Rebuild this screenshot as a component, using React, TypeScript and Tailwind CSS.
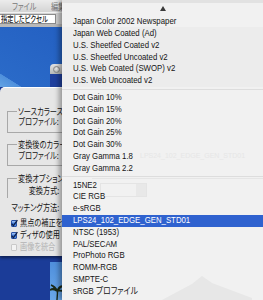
import type { ReactNode } from "react";

type MenuItem = { label: string; selected?: boolean };

// ICC profile popup, split by separators
const menuGroups: MenuItem[][] = [
  [
    { label: "Japan Color 2002 Newspaper" },
    { label: "Japan Web Coated (Ad)" },
    { label: "U.S. Sheetfed Coated v2" },
    { label: "U.S. Sheetfed Uncoated v2" },
    { label: "U.S. Web Coated (SWOP) v2" },
    { label: "U.S. Web Uncoated v2" },
  ],
  [
    { label: "Dot Gain 10%" },
    { label: "Dot Gain 15%" },
    { label: "Dot Gain 20%" },
    { label: "Dot Gain 25%" },
    { label: "Dot Gain 30%" },
    { label: "Gray Gamma 1.8" },
    { label: "Gray Gamma 2.2" },
  ],
  [
    { label: "15NE2" },
    { label: "CIE RGB" },
    { label: "e-sRGB" },
    { label: "LPS24_102_EDGE_GEN_STD01", selected: true },
    { label: "NTSC (1953)" },
    { label: "PAL/SECAM" },
    { label: "ProPhoto RGB" },
    { label: "ROMM-RGB" },
    { label: "SMPTE-C" },
    { label: "sRGB プロファイル" },
  ],
];

// screenshot is squeezed horizontally, so text is too
function Squeeze({ children, right = false }: { children: ReactNode; right?: boolean }) {
  return (
    <span
      className={`inline-block whitespace-nowrap scale-x-[0.84] ${right ? "origin-right" : "origin-left"}`}
    >
      {children}
    </span>
  );
}

// japanese UI labels come out a bit narrower than the latin menu text
function Jp({ children, right = false }: { children: ReactNode; right?: boolean }) {
  return (
    <span
      className={`inline-block whitespace-nowrap scale-x-[0.78] ${right ? "origin-right" : "origin-left"}`}
    >
      {children}
    </span>
  );
}

function Checkbox({ checked }: { checked: boolean }) {
  if (!checked) {
    return <span className="w-[6px] h-[7px] flex-none rounded-[1px] border border-[#c9c9c9] bg-[#f3f3f3]" />;
  }
  return (
    <span className="w-[6px] h-[7px] flex-none rounded-[1px] border border-[#2a53a6] bg-[linear-gradient(#a9c8f4,#3a78da_55%,#5d95e6)] flex items-center justify-center overflow-visible">
      <svg width="7" height="7" viewBox="0 0 7 7" className="overflow-visible">
        <path d="M0.6 3.6 L2.4 5.6 L6.4 0.2" stroke="#0d1f4a" strokeWidth="1.3" fill="none" />
      </svg>
    </span>
  );
}

function LabelRow({ label }: { label: string }) {
  return (
    <div className="h-[12px] w-[51px] flex items-center justify-end">
      <Jp right>{label}</Jp>
    </div>
  );
}

function CheckRow({ label, checked, disabled = false }: { label: string; checked: boolean; disabled?: boolean }) {
  return (
    <div className={`h-[12px] flex items-center gap-[3px] pl-[11px] ${disabled ? "text-[#b4b4b4]" : ""}`}>
      <Checkbox checked={checked} />
      <Jp>{label}</Jp>
    </div>
  );
}

function Dialog() {
  return (
    <div className="relative z-[1] h-[169px] bg-[#e6e6e6] rounded-tl-[5px] border-t border-white shadow-[0_2px_3px_rgba(0,0,0,0.45)] pt-[18px] text-[9.2px] leading-none text-[#141414]">
      <fieldset className="ml-[7px] border-t border-l border-b border-[#a8a8a8] pb-[4px]">
        <legend className="ml-[9px] px-[1px] h-[10px] leading-[10px]">
          <Jp>ソースカラースペース</Jp>
        </legend>
        <LabelRow label="プロファイル:" />
      </fieldset>

      <fieldset className="mt-[6px] ml-[7px] border-t border-l border-b border-[#a8a8a8] pt-[1px] pb-[3px]">
        <legend className="ml-[9px] px-[1px] h-[10px] leading-[10px]">
          <Jp>変換後のカラースペース</Jp>
        </legend>
        <LabelRow label="プロファイル:" />
      </fieldset>

      <fieldset className="mt-[7px] ml-[7px] border-t border-l border-[#a8a8a8] pt-[2px] pb-[1px]">
        <legend className="ml-[9px] px-[1px] h-[10px] leading-[10px]">
          <Jp>変換オプション</Jp>
        </legend>
        <LabelRow label="変換方式:" />
      </fieldset>

      <div className="mt-[4px] h-[12px] w-[59px] flex items-center justify-end">
        <Jp right>マッチング方法:</Jp>
      </div>
      <div className="mt-[3px] flex flex-col">
        <CheckRow label="黒点の補正を使用" checked />
        <CheckRow label="ディザの使用" checked />
        <CheckRow label="画像を統合" checked={false} disabled />
      </div>
    </div>
  );
}

function ProfileMenu() {
  return (
    <div className="absolute z-10 top-0 left-[62px] right-0 bottom-0 bg-[#f1f1f1] shadow-[-3px_0_5px_rgba(0,0,0,0.35)] font-['Liberation_Sans','Noto_Sans_CJK_JP',sans-serif] text-[9.3px] leading-none text-[#141414]">
      {/* faint things showing through the menu */}
      <div className="absolute top-0 left-0 right-0 h-[3px] bg-[#e2e2e2]" />
      <div className="absolute top-[27px] left-0 right-0 h-[60px] bg-[#ececec]" />
      <div className="absolute top-[178px] left-[30px] right-0 h-px bg-[#e5e5e5]" />
      <div className="absolute top-[183px] left-[38px] w-[47px] h-[14px] border border-[#e4e4e4] flex justify-end">
        <div className="w-[10px] bg-[#e8e8e8]" />
      </div>
      <div className="absolute top-[152px] left-[78px] text-[7px] text-[#e6e6e6]">LPS24_102_EDGE_GEN_STD01</div>
      <svg className="absolute bottom-0 left-[100px]" width="90" height="26" viewBox="0 0 90 26">
        <path d="M0 26 L30 10 L40 2 L50 9 L90 24 L90 26 Z" fill="#e7e7e7" />
      </svg>

      <div className="relative flex flex-col">
        <div className="h-[16px] flex items-center justify-center">
          <svg width="6" height="5" viewBox="0 0 6 5">
            <path d="M3 0 L6 5 L0 5 Z" fill="#3a3a3a" />
          </svg>
        </div>
        {menuGroups.map((group, gi) => (
          <div key={gi} className="flex flex-col">
            {gi > 0 && (
              <div className="h-[5px] flex items-center">
                <div className="h-px w-full bg-[#dddddd]" />
              </div>
            )}
            {group.map((item) => (
              <div
                key={item.label}
                className={`h-[11.8px] flex items-center pl-[11px] ${item.selected ? "bg-[#2f62cf] text-white" : ""}`}
              >
                <Squeeze>{item.label}</Squeeze>
              </div>
            ))}
          </div>
        ))}
      </div>
    </div>
  );
}

export default function App() {
  return (
    <div className="relative w-[263px] h-[300px] overflow-hidden bg-[#1b3c98] font-['Noto_Sans_CJK_JP',sans-serif] [font-feature-settings:'palt']">
      {/* everything right of x=62 sits under the popup menu */}
      <div className="flex flex-col w-[62px] h-full overflow-hidden">
        {/* menubar */}
        <div className="h-[12px] flex items-center pl-[12px] gap-[8px] bg-[linear-gradient(#ececec,#d4d4d4)] text-[9px] leading-none text-[#777777]">
          <Jp>ファイル</Jp>
          <Jp>編集</Jp>
        </div>

        {/* options bar */}
        <div className="h-[15px] bg-[#d3d3d3] border-t border-white/70 border-b-[3px] border-b-[#b9b9b9]">
          <div className="ml-[-1px] mt-[1px] w-[57px] h-[10px] bg-white border border-[#8c8c8c] flex items-center pl-[1px] text-[8px] leading-none text-[#222222] font-medium">
            <Jp>指定したピクセル</Jp>
          </div>
        </div>

        {/* desktop with a window peeking out */}
        <div className="h-[60px] bg-[linear-gradient(212deg,#2460c2_0%,#2a6ac8_86%,#4f90dc_86.6%,#63a3e4_100%)] pt-[37px] pl-[50px]">
          <div className="w-[24px] h-[23px] flex flex-col">
            <div className="h-[10px] rounded-tl-[4px] bg-[linear-gradient(#e3e3e3,#b8b8b8)] flex items-center pl-[3px]">
              <span className="w-[7px] h-[7px] rounded-full bg-[radial-gradient(circle_at_50%_35%,#f4f4f4,#a6a6a6)] border border-[#8a8a8a]" />
            </div>
            <div className="flex-1 bg-[#20409e]" />
          </div>
        </div>

        <Dialog />

        {/* desktop below the dialog */}
        <div className="flex-1 flex pt-[6px] pl-[50px]">
          <div className="w-[20px] bg-[linear-gradient(#4f8fdc,#6aa8ea)] flex flex-col justify-end">
            <svg width="14" height="18" viewBox="0 0 14 18">
              <path d="M7 18 L7.6 9 M7.4 9 C5 6 2 6 0 8 C3 7 5 8 7 9 C5 7 4 4 1 3 C4 4 6 6 7.5 9 C8 6 10 4 13 4 C10 5 9 7 8 9 C10 8 12 8 14 10 C11 8 9 9 7.4 9" stroke="#1b2a18" strokeWidth="1.4" fill="#1b2a18" />
            </svg>
          </div>
        </div>
      </div>

      <ProfileMenu />
    </div>
  );
}
